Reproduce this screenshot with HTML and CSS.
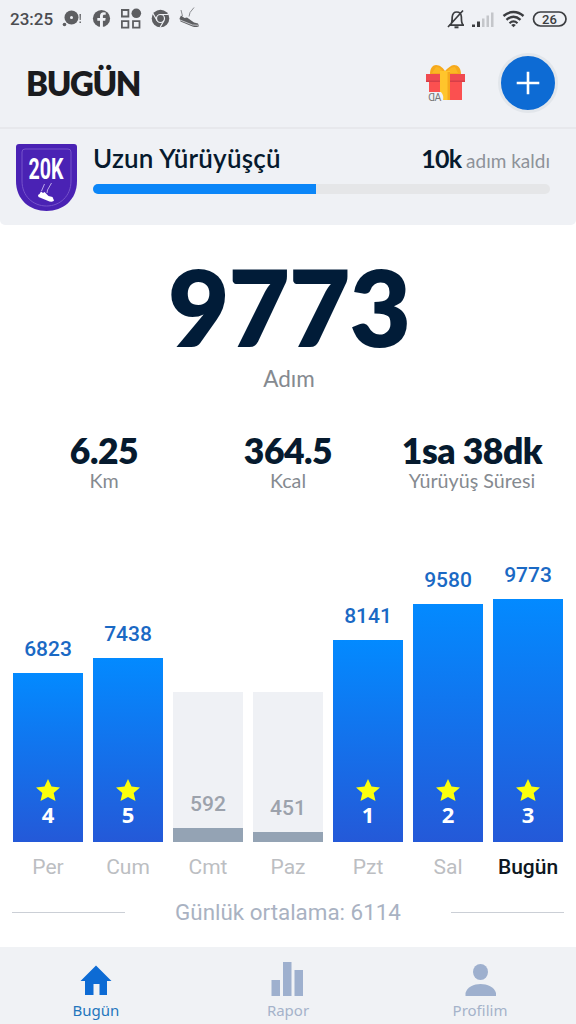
FILE: index.html
```html
<!DOCTYPE html>
<html lang="tr">
<head>
	<title>Bugün</title>
	<meta charset="utf-8">
	<link rel="stylesheet" href="styles.css">
</head>
<body>
<div class="status">
	<span class="clock">23:25</span>
	<svg class="status-left" width="140" height="24" viewBox="0 0 140 24">
		<g fill="#5d5e61">
			<circle cx="11.500" cy="10.500" r="7"/>
			<circle cx="4.500" cy="17.500" r="1.800"/>
			<path d="M19.500 7h1.400l-.2 6h-1z M19.500 14.500h1.400v1.500h-1.400z"/>
			<circle cx="41.500" cy="11.500" r="8.600"/>
			<circle cx="76.300" cy="6.300" r="4.800"/>
			<circle cx="100.500" cy="11.500" r="8.800"/>
			<path d="M121 8.500l-1.500 3 1 3 12 5c3 1 5.500.6 6.500-.6l-1-2.400-4-1-7-5-2.500.5z"/>
		</g>
		<circle cx="11.500" cy="10.500" r="1.500" fill="#eff1f5"/>
		<path d="M40 20.200v-6.500h-2.700v-2.600H40V9c0-2.500 1.400-3.800 3.700-3.800l2 .2v2.300h-1.300c-1.100 0-1.500.6-1.500 1.400v2h2.800l-.5 2.600h-2.300v6.500z" fill="#eff1f5"/>
		<path d="M61.900 3h6.500v6.500h-6.500z M61.900 14.200h6.500v6.500h-6.500z M73 14.200h6.500v6.500H73z" fill="none" stroke="#5d5e61" stroke-width="1.800"/>
		<circle cx="100.500" cy="11.500" r="4" fill="#5d5e61" stroke="#eff1f5" stroke-width="1.200"/>
		<path d="M100.500 7.500h8M97 13.500l-4-7M104 13.500l-4 7" stroke="#eff1f5" stroke-width="1.200"/>
		<path d="M120 13l12.500 5 6 .3" fill="none" stroke="#eff1f5" stroke-width=".7"/>
		<path d="M122.500 9l-1.500-6M129 9.500l1-4 4-5" fill="none" stroke="#8a8c90" stroke-width="1"/>
	</svg>
	<svg class="status-right" width="122" height="24" viewBox="0 0 122 24">
		<g fill="none" stroke="#3b3d40" stroke-width="1.700">
			<path d="M3 18.200h15M4.500 18c2-2 1.500-5 1.700-8 .3-3 2-5 4.500-5s4.500 2 4.700 5c.1 3-.3 6 1.800 8M2 20L17 3.500"/>
			<path d="M8.500 20.300h4" stroke-width="2"/>
			<path d="M57.500 9c6-5.300 14-5.300 20 0M60.500 12.800c4.500-4 9.500-4 14 0" stroke-width="2.400"/>
			<path d="M63.500 16.200c2.500-2.300 5.500-2.300 8 0" stroke-width="2.200"/>
			<rect x="87.500" y="5" width="32.500" height="14" rx="7"/>
		</g>
		<path d="M67.500 20.300l-2.300-2.300q2.300-1.800 4.600 0z" fill="#3b3d40"/>
		<path d="M26 17.500h3V20h-3z M31 14.500h3V20h-3z" fill="#3b3d40"/>
		<path d="M36 11.500h2.500V20H36z M40.500 8.500H43V20h-2.500z M45 5.500h2.500V20H45z" fill="#c4c6ca"/>
		<text class="battery" x="103.500" y="16.900" text-anchor="middle">26</text>
	</svg>
</div>

<div class="header">
	<h1>BUGÜN</h1>
	<svg class="gift" width="42" height="42" viewBox="0 0 42 42">
		<path d="M5 18h33v20H5z" fill="#fb5050"/>
		<path d="M2 12h39v8H2z" fill="#f04a50"/>
		<path d="M2 18.500h39V20H2z" fill="#d63e48"/>
		<path d="M6 12c0-6 3-9 6-9 4 0 7 3 9 6 3-3 6-6 9-6 4 0 7 3 7 9z" fill="#f6a91c"/>
		<path d="M12 5c4 0 6 3 8 6h2c2-3 5-6 9-6l3 6H8z" fill="#fbb724"/>
		<path d="M16 9h10v29H16z" fill="#ffc52c"/>
		<path d="M23.500 10H26v28h-2.500z" fill="#f6a91c"/>
		<path d="M3 30h14q3 3 2 9H3z" fill="#eff1f5"/>
		<text class="gift-text" x="-11" y="38.500" transform="scale(-1 1)">D</text>
		<text class="gift-text" x="10.500" y="38.500">A</text>
	</svg>
	<div class="add">
		<svg width="24" height="24" viewBox="0 0 24 24"><path d="M12 .7v22.600M.7 12h22.600" stroke="#fff" stroke-width="2.600"/></svg>
	</div>
</div>

<div class="goal">
	<svg class="shield" width="61" height="68" viewBox="0 0 61 68">
		<path d="M3 0h55q3 0 3 3v34C61 56 47 67 30.500 67S0 56 0 37V3q0-3 3-3z" fill="#4a22b4"/>
		<path d="M9 5h43q3 0 3 3v29C55 52 44 62 30.500 62S6 52 6 37V8q0-3 3-3z" fill="none" stroke="#7552ca" stroke-width="1"/>
		<text class="shield-text" x="12.500" y="34.700" textLength="35" lengthAdjust="spacingAndGlyphs">20K</text>
		<path d="M25 47.500l-1.500 2.500-1.500 1 .5 2 11 4.500q4 .6 4.500-1l-1.500-3.500-4-1-4-4-1.500 1z" fill="#fff"/>
		<path d="M25.500 47l3-7M31 49l.5-3 4-7" fill="none" stroke="#c9b9ee" stroke-width=".9"/>
	</svg>
	<div class="goal-info">
		<div class="goal-row">
			<span class="goal-name">Uzun Yürüyüşçü</span>
			<span class="goal-left"><b>10k</b> adım kaldı</span>
		</div>
		<div class="progress"><div class="progress-fill" style="width: 48.900%;"></div></div>
	</div>
</div>

<div class="today">
	<div class="steps">9773</div>
	<div class="steps-label">Adım</div>
</div>

<div class="stats">
	<div class="stat"><b>6.25</b><span>Km</span></div>
	<div class="stat"><b>364.5</b><span>Kcal</span></div>
	<div class="stat"><b>1sa 38dk</b><span>Yürüyüş Süresi</span></div>
</div>

<div class="chart">
	<div class="day">
		<div class="value">6823</div>
		<div class="bar" style="height: 169px;"><svg class="star" viewBox="0 0 24 22"><path d="M12 0l3.500 7.500 8.500.9-6.300 5.600 1.800 8L12 18l-7.500 4 1.800-8L0 8.400l8.500-.9z"/></svg><b>4</b></div>
		<div class="name">Per</div>
	</div>
	<div class="day">
		<div class="value">7438</div>
		<div class="bar" style="height: 184px;"><svg class="star" viewBox="0 0 24 22"><path d="M12 0l3.500 7.500 8.500.9-6.300 5.600 1.800 8L12 18l-7.500 4 1.800-8L0 8.400l8.500-.9z"/></svg><b>5</b></div>
		<div class="name">Cum</div>
	</div>
	<div class="day">
		<div class="track"><div class="low-value">592</div><div class="low" style="height: 14px;"></div></div>
		<div class="name">Cmt</div>
	</div>
	<div class="day">
		<div class="track"><div class="low-value">451</div><div class="low" style="height: 10px;"></div></div>
		<div class="name">Paz</div>
	</div>
	<div class="day">
		<div class="value">8141</div>
		<div class="bar" style="height: 202px;"><svg class="star" viewBox="0 0 24 22"><path d="M12 0l3.500 7.500 8.500.9-6.300 5.600 1.800 8L12 18l-7.500 4 1.800-8L0 8.400l8.500-.9z"/></svg><b>1</b></div>
		<div class="name">Pzt</div>
	</div>
	<div class="day">
		<div class="value">9580</div>
		<div class="bar" style="height: 238px;"><svg class="star" viewBox="0 0 24 22"><path d="M12 0l3.500 7.500 8.500.9-6.300 5.600 1.800 8L12 18l-7.500 4 1.800-8L0 8.400l8.500-.9z"/></svg><b>2</b></div>
		<div class="name">Sal</div>
	</div>
	<div class="day">
		<div class="value">9773</div>
		<div class="bar" style="height: 243px;"><svg class="star" viewBox="0 0 24 22"><path d="M12 0l3.500 7.500 8.500.9-6.300 5.600 1.800 8L12 18l-7.500 4 1.800-8L0 8.400l8.500-.9z"/></svg><b>3</b></div>
		<div class="name current">Bugün</div>
	</div>
</div>

<div class="average">
	<i></i><span>Günlük ortalama: 6114</span><i></i>
</div>

<div class="tabs">
	<div class="tab active">
		<svg width="36" height="36" viewBox="0 0 36 36"><path d="M18 4.500L33.500 20H29v14h-7.500V23h-6v11H7V20H2.500z"/></svg>
		<span>Bugün</span>
	</div>
	<div class="tab">
		<svg width="36" height="36" viewBox="0 0 36 36"><path d="M1.500 19H10v16H1.500z M13 1h8.500v34H13z M24.500 9H33v26h-8.500z"/></svg>
		<span>Rapor</span>
	</div>
	<div class="tab">
		<svg width="36" height="36" viewBox="0 0 36 36"><ellipse cx="18.500" cy="11" rx="7.500" ry="8"/><path d="M3.500 35v-3C5 26 12 23 18.500 23s14 3 15.500 9v3z"/></svg>
		<span>Profilim</span>
	</div>
</div>
</body>
</html>
```

FILE: styles.css
```css
*{
	margin: 0;
	padding: 0;
	box-sizing: border-box;
}
body{
	width: 576px;
	height: 1024px;
	overflow: hidden;
	display: flex;
	flex-direction: column;
	background-color: #fff;
	font-family: Lato, sans-serif;
	color: #061a2e;
}
svg{
	display: block;
	flex: none;
}
.status{
	height: 38px;
	padding: 0 8px 0 10px;
	display: flex;
	align-items: center;
	background-color: #eff1f5;
}
.clock{
	width: 50px;
	font: 500 17px/40px Roboto, sans-serif;
	color: #4b4c50;
}
.status-right{
	margin-left: auto;
}
.battery{
	font: 500 13px Roboto, sans-serif;
	fill: #3b3d40;
}
.header{
	height: 91px;
	padding: 1px 18px 0 26px;
	display: flex;
	align-items: center;
	background-color: #eff1f5;
	border-bottom: 2px solid #e7e8ec;
}
h1{
	font-size: 33px;
	line-height: 42px;
	font-weight: 800;
	letter-spacing: -1.400px;
	color: #1a1b1e;
}
.gift{
	margin: 0 32px 0 auto;
}
.gift-text{
	font: 10.500px Roboto, sans-serif;
	fill: #777;
}
.add{
	width: 60px;
	height: 60px;
	display: flex;
	align-items: center;
	justify-content: center;
	background-color: #0d6bd4;
	border: 3px solid #e2e6eb;
	border-radius: 50%;
}
.goal{
	height: 96px;
	padding: 15px 26px 0 16px;
	display: flex;
	background-color: #eff1f5;
	border-radius: 0 0 5px 5px;
}
.shield{
	overflow: visible;
}
.shield-text{
	font: 700 30px Roboto, sans-serif;
	fill: #fff;
}
.goal-info{
	flex: 1;
	margin-left: 16px;
}
.goal-row{
	height: 40px;
	display: flex;
	justify-content: space-between;
	line-height: 29px;
}
.goal-name{
	font-size: 26px;
	font-weight: 600;
	letter-spacing: .2px;
}
.goal-left{
	font-size: 19px;
	color: #8d9299;
}
.goal-left b{
	font-size: 25px;
	letter-spacing: -.8px;
	color: #061a2e;
}
.progress{
	height: 10px;
	overflow: hidden;
	background-color: #e5e6e8;
	border-radius: 5px;
}
.progress-fill{
	height: 10px;
	background-color: #0b86f8;
}
.today{
	height: 201px;
	padding: 28px 0 0 2px;
	text-align: center;
}
.steps{
	height: 112px;
	font-size: 106px;
	line-height: 106px;
	font-weight: 800;
	letter-spacing: -1px;
	color: #011c38;
}
.steps-label{
	font-size: 22.500px;
	line-height: 28px;
	color: #858a90;
}
.stats{
	height: 114px;
	padding: 4px 12px 0;
	display: grid;
	grid-template-columns: repeat(3, 1fr);
	text-align: center;
}
.stat b{
	display: block;
	font-size: 35.500px;
	line-height: 42px;
	font-weight: 800;
	letter-spacing: -.500px;
}
.stat span{
	display: block;
	font-size: 19.700px;
	line-height: 18px;
	color: #858a90;
}
.chart{
	height: 344px;
	padding: 0 13px;
	display: flex;
	gap: 10px;
	align-items: flex-end;
	font-family: Roboto, sans-serif;
	text-align: center;
}
.day{
	flex: 1;
}
.value{
	height: 36px;
	font-size: 21px;
	line-height: 24px;
	font-weight: 500;
	color: #1a69c4;
}
.bar{
	display: flex;
	flex-direction: column;
	align-items: center;
	justify-content: flex-end;
	padding-bottom: 16px;
	background-image: linear-gradient(#038aff, #2459d8);
}
.star{
	width: 24px;
	height: 22px;
	fill: #fbff0c;
}
.bar b{
	margin-top: 1px;
	font: 700 22px/24px "Noto Sans", sans-serif;
	color: #fff;
}
.track{
	height: 150px;
	display: flex;
	flex-direction: column;
	justify-content: flex-end;
	background-color: #eff1f5;
}
.low-value{
	height: 36px;
	font-size: 21px;
	line-height: 24px;
	font-weight: 500;
	color: #9ca2ac;
}
.low{
	background-color: #94a3b4;
}
.name{
	height: 42px;
	padding-top: 12px;
	font-size: 21px;
	line-height: 26px;
	color: #bcbec2;
}
.current{
	font-weight: 500;
	color: #0d1722;
}
.average{
	height: 63px;
	padding: 0 12px;
	display: flex;
	align-items: flex-start;
	justify-content: space-between;
	font: 22.400px/56px Roboto, sans-serif;
	color: #a9b2c2;
}
.average i{
	width: 113px;
	height: 1px;
	margin-top: 28px;
	background-color: #cbcfd6;
}
.tabs{
	height: 77px;
	display: grid;
	grid-template-columns: repeat(3, 1fr);
	background-color: #f0f2f5;
}
.tab{
	display: flex;
	flex-direction: column;
	align-items: center;
	padding-top: 14px;
	font: 15px/26px "Noto Sans", sans-serif;
	color: #a5b3ca;
	fill: #9eb0ce;
}
.active{
	color: #2476bd;
	fill: #0d6bd4;
}
```
